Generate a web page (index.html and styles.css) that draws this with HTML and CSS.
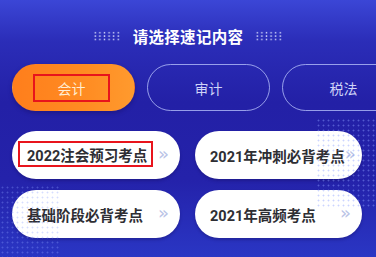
FILE: index.html
```html
<!DOCTYPE html>
<html lang="zh">
<head>
<meta charset="utf-8">
<link rel="stylesheet" href="styles.css">
</head>
<body>
<div class="page">
  <div class="header">
    <span class="dots"></span>
    <h1 class="title">请选择速记内容</h1>
    <span class="dots"></span>
  </div>
  <div class="tabs">
    <div class="tab tab-active"><span class="mark-tab">会计</span></div>
    <div class="tab">审计</div>
    <div class="tab">税法</div>
  </div>
  <div class="cards">
    <div class="card card-marked"><span class="card-text mark-card">2022注会预习考点</span><span class="chev">»</span></div>
    <div class="card"><span class="card-text">2021年冲刺必背考点</span><span class="chev">»</span></div>
    <div class="card"><span class="card-text">基础阶段必背考点</span><span class="chev">»</span></div>
    <div class="card"><span class="card-text">2021年高频考点</span><span class="chev">»</span></div>
  </div>
</div>
</body>
</html>
```
FILE: styles.css
```css
html, body {
  margin: 0;
  padding: 0;
}
body {
  width: 376px;
  height: 257px;
  overflow: hidden;
  font-family: "Noto Sans CJK SC", "Noto Sans", sans-serif;
}
.page {
  width: 376px;
  height: 257px;
  overflow: hidden;
  background: linear-gradient(180deg, #3b46d6 0%, #2b2db8 16%, #2320a6 40%, #2422aa 70%, #2a36c4 100%);
  position: relative;
}
.page::before {
  content: "";
  position: absolute;
  right: 0;
  top: 118px;
  width: 60px;
  height: 90px;
  background: radial-gradient(circle, rgba(140,160,255,0.45) 0.7px, transparent 1.2px) 0 0 / 5px 5px;
}
.page::after {
  content: "";
  position: absolute;
  left: 0;
  top: 185px;
  width: 60px;
  height: 72px;
  background: radial-gradient(circle, rgba(140,160,255,0.35) 0.7px, transparent 1.2px) 0 0 / 5px 5px;
}
.header {
  display: flex;
  align-items: center;
  justify-content: center;
  gap: 12px;
  padding-top: 26px;
  height: 20px;
}
.title {
  margin: 0;
  font-size: 15.5px;
  font-weight: 700;
  color: #ffffff;
  line-height: 20px;
  letter-spacing: 0.3px;
}
.dots {
  width: 28px;
  height: 10px;
  background: radial-gradient(circle, rgba(220,225,255,0.85) 0.75px, transparent 1.1px) 0 0 / 4.6px 3.4px;
}
.tabs {
  display: flex;
  gap: 12px;
  padding-left: 12px;
  margin-top: 18px;
  white-space: nowrap;
}
.tab {
  flex: 0 0 auto;
  width: 121px;
  height: 45px;
  border: 1px solid rgba(190,200,255,0.75);
  border-radius: 24px;
  display: flex;
  align-items: center;
  justify-content: center;
  font-size: 14px;
  color: #cfd3f7;
}
.tab-active {
  border-color: transparent;
  background: linear-gradient(90deg, #ff7e1c 0%, #ff8c22 60%, #ff9a2e 100%);
  color: #ffedd2;
  box-shadow: 0 2px 4px rgba(20,10,80,0.35);
}
.mark-tab {
  box-sizing: border-box;
  width: 77px;
  height: 28px;
  margin-left: -4px;
  margin-top: 1px;
  border: 2px solid #e8141c;
  display: flex;
  align-items: center;
  justify-content: center;
}
.cards {
  display: grid;
  grid-template-columns: 168px 167px;
  column-gap: 15px;
  row-gap: 11px;
  padding-left: 12px;
  margin-top: 20px;
}
.card {
  box-sizing: border-box;
  height: 48px;
  background: #ffffff;
  border-radius: 24px;
  display: flex;
  align-items: center;
  justify-content: space-between;
  padding: 0 11px 0 15px;
  box-shadow: 0 2px 3px rgba(20,10,80,0.3);
}
.card-marked {
  padding-left: 6px;
}
.card-text {
  font-family: "Roboto", "Noto Sans CJK SC", sans-serif;
  font-size: 14.5px;
  font-weight: 700;
  color: #2e2e33;
  white-space: nowrap;
}
.mark-card {
  box-sizing: border-box;
  width: 135px;
  height: 26px;
  margin-top: -2px;
  padding-left: 7px;
  border: 2px solid #e8141c;
  display: flex;
  align-items: center;
}
.chev {
  font-family: "DejaVu Sans", sans-serif;
  font-size: 18px;
  color: #b9c3e6;
  line-height: 1;
  margin-top: -3px;
}
```
